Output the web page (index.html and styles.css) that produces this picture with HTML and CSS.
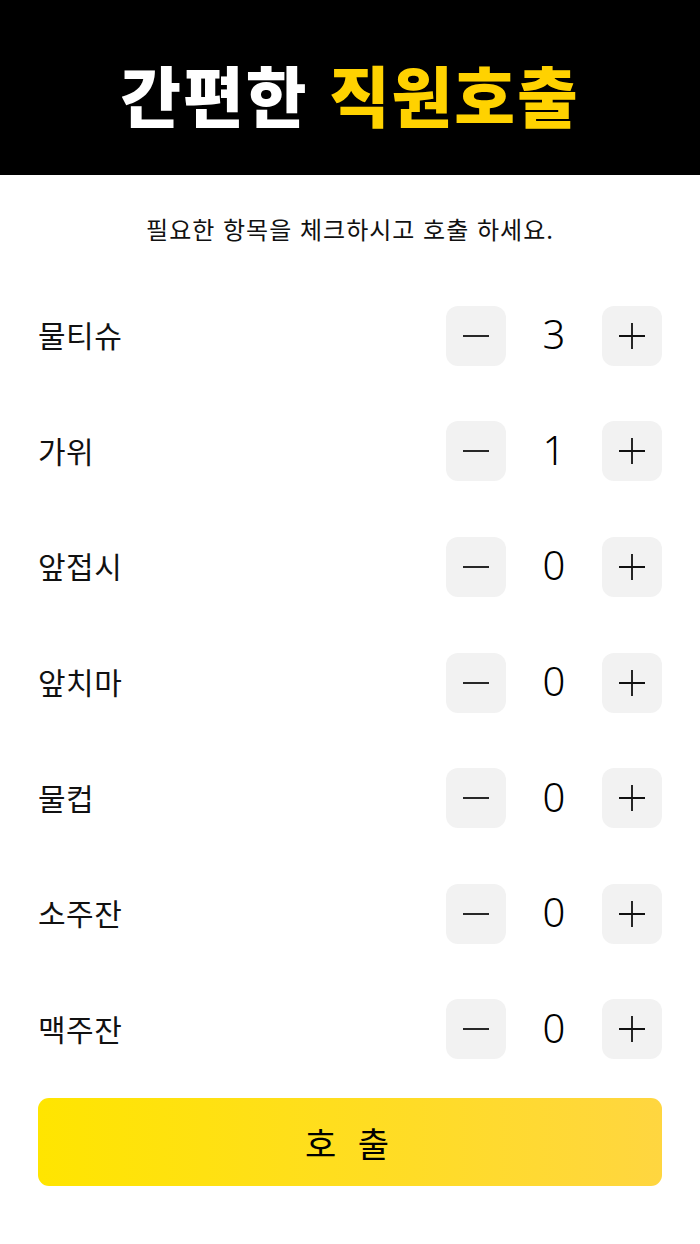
FILE: index.html
```html
<!DOCTYPE html>
<html lang="ko">
<head>
<meta charset="utf-8">
<link rel="stylesheet" href="styles.css">
</head>
<body>
<header class="hero">
  <h1 class="title"><span class="w">간편한</span> <span class="y">직원호출</span></h1>
</header>
<main class="content">
  <p class="guide">필요한 항목을 체크하시고 호출 하세요.</p>
  <ul class="list">
    <li class="row"><span class="label">물티슈</span><div class="stepper"><button class="btn"><svg viewBox="0 0 30 30"><path d="M2 15H28"/></svg></button><span class="num">3</span><button class="btn"><svg viewBox="0 0 30 30"><path d="M2 15H28M15 2V28"/></svg></button></div></li>
    <li class="row"><span class="label">가위</span><div class="stepper"><button class="btn"><svg viewBox="0 0 30 30"><path d="M2 15H28"/></svg></button><span class="num">1</span><button class="btn"><svg viewBox="0 0 30 30"><path d="M2 15H28M15 2V28"/></svg></button></div></li>
    <li class="row"><span class="label">앞접시</span><div class="stepper"><button class="btn"><svg viewBox="0 0 30 30"><path d="M2 15H28"/></svg></button><span class="num">0</span><button class="btn"><svg viewBox="0 0 30 30"><path d="M2 15H28M15 2V28"/></svg></button></div></li>
    <li class="row"><span class="label">앞치마</span><div class="stepper"><button class="btn"><svg viewBox="0 0 30 30"><path d="M2 15H28"/></svg></button><span class="num">0</span><button class="btn"><svg viewBox="0 0 30 30"><path d="M2 15H28M15 2V28"/></svg></button></div></li>
    <li class="row"><span class="label">물컵</span><div class="stepper"><button class="btn"><svg viewBox="0 0 30 30"><path d="M2 15H28"/></svg></button><span class="num">0</span><button class="btn"><svg viewBox="0 0 30 30"><path d="M2 15H28M15 2V28"/></svg></button></div></li>
    <li class="row"><span class="label">소주잔</span><div class="stepper"><button class="btn"><svg viewBox="0 0 30 30"><path d="M2 15H28"/></svg></button><span class="num">0</span><button class="btn"><svg viewBox="0 0 30 30"><path d="M2 15H28M15 2V28"/></svg></button></div></li>
    <li class="row"><span class="label">맥주잔</span><div class="stepper"><button class="btn"><svg viewBox="0 0 30 30"><path d="M2 15H28"/></svg></button><span class="num">0</span><button class="btn"><svg viewBox="0 0 30 30"><path d="M2 15H28M15 2V28"/></svg></button></div></li>
  </ul>
  <button class="call">호 출</button>
</main>
</body>
</html>
```
FILE: styles.css
```css
* { box-sizing: border-box; }
html, body { margin: 0; padding: 0; background: #fff; }
body {
  width: 700px;
  font-family: "Noto Sans CJK KR", "Noto Sans", sans-serif;
  color: #000;
}
.hero {
  height: 175px;
  background: #000;
  display: flex;
  align-items: center;
  justify-content: center;
}
.title {
  margin: 0;
  font-size: 66px;
  font-weight: 900;
  line-height: 1;
  letter-spacing: 2px;
  padding-top: 10px;
}
.title .w { color: #fff; }
.title .y { color: #ffd200; }
.content {
  padding: 0 38px;
}
.guide {
  margin: 0;
  padding-top: 39px;
  height: 103px;
  text-align: center;
  font-size: 24px;
  line-height: 30px;
  letter-spacing: 1px;
  color: #111;
}
.list {
  list-style: none;
  margin: 0;
  padding: 0;
}
.row {
  height: 115.6px;
  display: flex;
  align-items: center;
  justify-content: space-between;
}
.label {
  font-size: 30px;
  letter-spacing: 0.5px;
  color: #111;
  padding-bottom: 3px;
}
.stepper {
  display: flex;
  align-items: center;
}
.btn {
  width: 60px;
  height: 60px;
  border: none;
  border-radius: 12px;
  background: #f2f2f2;
  padding: 0;
  display: flex;
  align-items: center;
  justify-content: center;
}
.btn svg {
  width: 30px;
  height: 30px;
  fill: none;
  stroke: #111;
  stroke-width: 1.8;
}
.num {
  width: 96px;
  text-align: center;
  font-size: 40px;
  font-weight: 300;
  font-family: "Noto Sans", "Noto Sans CJK KR", sans-serif;
  line-height: 1;
  padding-bottom: 3px;
}
.call {
  display: block;
  width: 624px;
  height: 88px;
  margin-top: 11px;
  border: none;
  border-radius: 11px;
  background: linear-gradient(90deg, #ffe500, #ffd640);
  font-family: "Noto Sans CJK KR", sans-serif;
  font-size: 34px;
  color: #000;
  letter-spacing: 6px;
  padding-left: 6px;
}
```
